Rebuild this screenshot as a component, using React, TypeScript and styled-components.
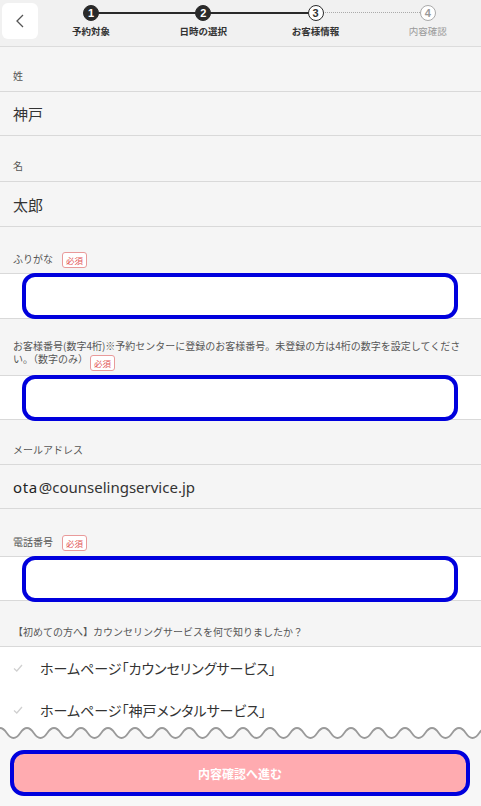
import React from 'react';
import styled, { createGlobalStyle } from 'styled-components';

const GlobalStyle = createGlobalStyle`
  html, body {
    margin: 0;
    padding: 0;
  }
  body {
    background: #f5f5f5;
    font-family: "Noto Sans CJK JP", "Noto Sans", sans-serif;
    color: #333;
  }
`;

type StepState = 'done' | 'current' | 'todo';

const steps: { no: number; label: string; state: StepState; line?: 'solid' | 'dotted' }[] = [
  { no: 1, label: '予約対象', state: 'done' },
  { no: 2, label: '日時の選択', state: 'done', line: 'solid' },
  { no: 3, label: 'お客様情報', state: 'current', line: 'solid' },
  { no: 4, label: '内容確認', state: 'todo', line: 'dotted' },
];

const options = ['ホームページ「カウンセリングサービス」', 'ホームページ「神戸メンタルサービス」'];

const wavePath = (width: number) => {
  let d = 'M -6.75 9 q 6.75 -10 13.5 0';
  for (let x = 6.75; x < width + 14; x += 13.5) d += ' t 13.5 0';
  return d;
};

const App = () => {
  const waveLine = wavePath(481);
  return (
    <Page>
      <GlobalStyle />
      <Header>
        <BackButton>
          <svg width="36" height="36" viewBox="0 0 36 36">
            <polyline points="21,12 15,18 21,24" fill="none" stroke="#555" strokeWidth="1.3" />
          </svg>
        </BackButton>
        <Steps>
          {steps.map((s) => (
            <Step key={s.no} $line={s.line}>
              <StepCircle $state={s.state}>{s.no}</StepCircle>
              <StepLabel $state={s.state}>{s.label}</StepLabel>
            </Step>
          ))}
        </Steps>
      </Header>

      <Form>
        <LabelRow $h={45} $pb={7}>
          <LabelText>姓</LabelText>
        </LabelRow>
        <ValueRow $h={44}>神戸</ValueRow>

        <LabelRow $h={46} $pb={7}>
          <LabelText>名</LabelText>
        </LabelRow>
        <ValueRow $h={45}>太郎</ValueRow>

        <LabelRow $h={47} $pb={5}>
          <LabelText>
            ふりがな<Badge $gap={9}>必須</Badge>
          </LabelText>
        </LabelRow>
        <InputRow $h={45}>
          <InputBox />
        </InputRow>

        <LabelRow $h={57} $pb={4}>
          <LabelText $lh={13}>
            お客様番号(数字4桁)※予約センターに登録のお客様番号。未登録の方は4桁の数字を設定してください。（数字のみ）
            <Badge $gap={2} $low>必須</Badge>
          </LabelText>
        </LabelRow>
        <InputRow $h={44}>
          <InputBox />
        </InputRow>

        <LabelRow $h={45} $pb={6}>
          <LabelText>メールアドレス</LabelText>
        </LabelRow>
        <ValueRow $h={44}>
          <EmailText>
            <span className="typed">ota</span>@counselingservice.jp
          </EmailText>
        </ValueRow>

        <LabelRow $h={48} $pb={5}>
          <LabelText>
            電話番号<Badge $gap={9}>必須</Badge>
          </LabelText>
        </LabelRow>
        <InputRow $h={44}>
          <InputBox />
        </InputRow>

        <LabelRow $h={46} $pb={6}>
          <LabelText>【初めての方へ】カウンセリングサービスを何で知りましたか？</LabelText>
        </LabelRow>
        <OptionList>
          {options.map((o) => (
            <OptionRow key={o}>
              <svg width="10" height="8" viewBox="0 0 10 8">
                <polyline points="1,4.5 3.8,7 9,1" fill="none" stroke="#d0d0d0" strokeWidth="1.3" />
              </svg>
              <OptionText>{o}</OptionText>
            </OptionRow>
          ))}
        </OptionList>
      </Form>

      <Footer>
        <Wave width="481" height="16" viewBox="0 0 481 16" preserveAspectRatio="none">
          <path d={`${waveLine} L 495 16 L -7 16 Z`} fill="#f7f7f7" />
          <path d={waveLine} fill="none" stroke="#9a9a9a" strokeWidth="1.8" />
        </Wave>
        <FooterBody>
          <SubmitButton>内容確認へ進む</SubmitButton>
        </FooterBody>
      </Footer>
    </Page>
  );
};

export default App;

const Page = styled.div`
  position: relative;
  width: 481px;
  height: 806px;
  overflow: hidden;
  display: flex;
  flex-direction: column;
  background: #f5f5f5;
`;

const Header = styled.header`
  box-sizing: border-box;
  height: 47px;
  display: flex;
  align-items: flex-start;
  background: #f1f1f1;
  border-bottom: 1px solid #dcdcdc;
`;

const BackButton = styled.div`
  flex: 0 0 36px;
  width: 36px;
  height: 36px;
  margin: 3px 0 0 2px;
  background: #fff;
  border-radius: 6px;
  svg {
    display: block;
  }
`;

const Steps = styled.div`
  flex: 1;
  margin-left: -3px;
  margin-right: -3px;
  display: grid;
  grid-template-columns: repeat(4, 1fr);
`;

const Step = styled.div<{ $line?: 'solid' | 'dotted' }>`
  position: relative;
  display: flex;
  flex-direction: column;
  align-items: center;
  padding-top: 5px;

  &::before {
    content: '';
    display: ${({ $line }) => ($line ? 'block' : 'none')};
    position: absolute;
    top: 12px;
    left: -50%;
    right: 50%;
    border-top: ${({ $line }) => ($line === 'solid' ? '2px solid #2a2a2a' : '1.5px dotted #aaa')};
  }
`;

const StepCircle = styled.div<{ $state: StepState }>`
  position: relative;
  z-index: 1;
  box-sizing: border-box;
  width: 16px;
  height: 16px;
  border-radius: 50%;
  display: flex;
  align-items: center;
  justify-content: center;
  font-family: "Liberation Sans", Arial, sans-serif;
  font-size: 11px;
  font-weight: bold;
  background: ${({ $state }) => ($state === 'done' ? '#2a2a2a' : '#fff')};
  color: ${({ $state }) => ($state === 'done' ? '#fff' : $state === 'current' ? '#333' : '#999')};
  border: 1.5px solid ${({ $state }) => ($state === 'todo' ? '#aaa' : '#2a2a2a')};
`;

const StepLabel = styled.div<{ $state: StepState }>`
  margin-top: 4px;
  font-size: 9.5px;
  line-height: 12px;
  font-weight: ${({ $state }) => ($state === 'todo' ? 'normal' : 'bold')};
  color: ${({ $state }) => ($state === 'todo' ? '#999' : '#333')};
  white-space: nowrap;
`;

const Form = styled.main`
  flex: 1;
  overflow: hidden;
`;

const LabelRow = styled.div<{ $h: number; $pb: number }>`
  box-sizing: border-box;
  height: ${({ $h }) => $h}px;
  padding: 0 13px ${({ $pb }) => $pb}px;
  display: flex;
  align-items: flex-end;
  border-bottom: 1px solid #d9d9d9;
  background: #f5f5f5;
`;

const LabelText = styled.div<{ $lh?: number }>`
  font-size: 10px;
  line-height: ${({ $lh }) => $lh ?? 16}px;
  color: #555;
`;

const Badge = styled.span<{ $gap: number; $low?: boolean }>`
  display: inline-block;
  box-sizing: border-box;
  height: 16px;
  padding: 0 3px;
  margin-left: ${({ $gap }) => $gap}px;
  vertical-align: ${({ $low }) => ($low ? '-4px' : 'middle')};
  border: 1px solid #e99a9a;
  border-radius: 3px;
  background: #fff;
  color: #e25555;
  font-size: 8.5px;
  line-height: 14px;
`;

const ValueRow = styled.div<{ $h: number }>`
  box-sizing: border-box;
  height: ${({ $h }) => $h}px;
  padding: 0 13px;
  display: flex;
  align-items: center;
  border-bottom: 1px solid #d9d9d9;
  font-size: 15px;
  color: #333;
`;

const EmailText = styled.span`
  font-family: "Noto Sans", sans-serif;
  font-size: 15px;
  color: #333;
  .typed {
    letter-spacing: 0.6px;
    color: #222;
    margin-right: 1px;
  }
`;

const InputRow = styled.div<{ $h: number }>`
  box-sizing: border-box;
  height: ${({ $h }) => $h}px;
  padding: 0 22px;
  display: flex;
  align-items: center;
  background: #fff;
  border-bottom: 1px solid #d9d9d9;
`;

const InputBox = styled.div`
  box-sizing: border-box;
  flex: 0 0 436px;
  height: 46px;
  border: 4px solid #0000dd;
  border-radius: 13px;
  background: #fff;
`;

const OptionList = styled.div`
  background: #fff;
  height: 200px;
`;

const OptionRow = styled.div`
  height: 42px;
  display: flex;
  align-items: center;
  padding-left: 13px;
  svg {
    flex: 0 0 10px;
  }
`;

const OptionText = styled.span`
  margin-left: 17px;
  font-size: 14px;
  font-feature-settings: "palt";
  color: #333;
`;

const Footer = styled.footer`
  position: absolute;
  left: 0;
  right: 0;
  bottom: 0;
`;

const Wave = styled.svg`
  display: block;
  width: 100%;
  height: 16px;
`;

const FooterBody = styled.div`
  background: #f7f7f7;
  padding: 10px 11px 10px 10px;
`;

const SubmitButton = styled.button`
  box-sizing: border-box;
  display: block;
  width: 100%;
  height: 46px;
  border: 4px solid #0000dd;
  border-radius: 14px;
  background: #ffabb0;
  color: #fff;
  font-family: "Noto Sans CJK JP", sans-serif;
  font-size: 12px;
  font-weight: bold;
  cursor: pointer;
`;
